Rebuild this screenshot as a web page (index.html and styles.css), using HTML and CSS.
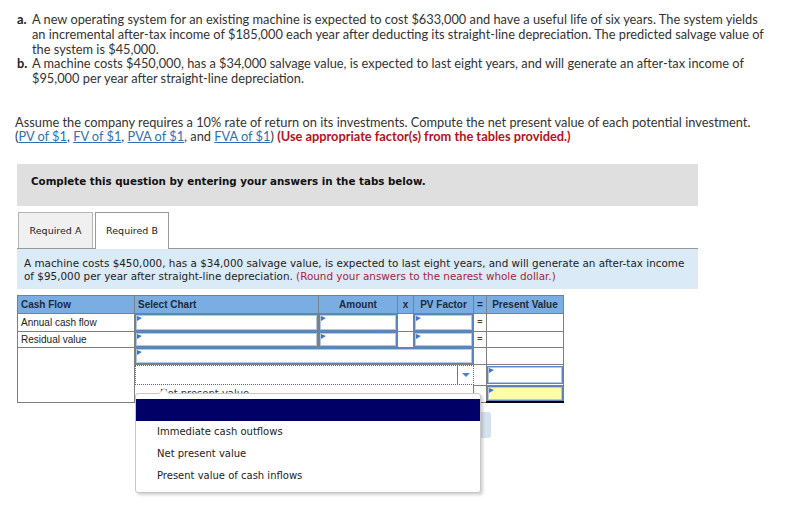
FILE: index.html
```html
<!DOCTYPE html>
<html>
<head>
<meta charset="utf-8">
<link rel="stylesheet" href="styles.css">
</head>
<body>
<div class="page">
  <div class="problem">
    <div class="item"><span class="lbl">a.</span><span class="txt">A new operating system for an existing machine is expected to cost $633,000 and have a useful life of six years. The system yields an incremental after-tax income of $185,000 each year after deducting its straight-line depreciation. The predicted salvage value of the system is $45,000.</span></div>
    <div class="item"><span class="lbl">b.</span><span class="txt">A machine costs $450,000, has a $34,000 salvage value, is expected to last eight years, and will generate an after-tax income of $95,000 per year after straight-line depreciation.</span></div>
  </div>
  <p class="assume">Assume the company requires a 10% rate of return on its investments. Compute the net present value of each potential investment.<br>(<a href="#">PV of $1</a>, <a href="#">FV of $1</a>, <a href="#">PVA of $1</a>, and <a href="#">FVA of $1</a>) <span class="red">(Use appropriate factor(s) from the tables provided.)</span></p>
  <div class="instructions">Complete this question by entering your answers in the tabs below.</div>
  <div class="tabs">
    <div class="tab">Required A</div>
    <div class="tab active">Required B</div>
  </div>
  <div class="panel">A machine costs $450,000, has a $34,000 salvage value, is expected to last eight years, and will generate an after-tax income of $95,000 per year after straight-line depreciation. <span class="note">(Round your answers to the nearest whole dollar.)</span></div>
  <div class="work">
    <table class="grid">
      <colgroup>
        <col class="c1"><col class="c2"><col class="c3"><col class="c4"><col class="c5"><col class="c6"><col class="c7">
      </colgroup>
      <tr class="rh">
        <th>Cash Flow</th><th>Select Chart</th><th class="ctr">Amount</th><th class="ctr">x</th><th class="ctr">PV Factor</th><th class="ctr">=</th><th class="ctr">Present Value</th>
      </tr>
      <tr class="r1">
        <td class="lab">Annual cash flow</td><td><div class="inp"></div></td><td><div class="inp"></div></td><td></td><td><div class="inp"></div></td><td class="eq">=</td><td></td>
      </tr>
      <tr class="r2">
        <td class="lab">Residual value</td><td><div class="inp"></div></td><td><div class="inp"></div></td><td></td><td><div class="inp"></div></td><td class="eq">=</td><td></td>
      </tr>
      <tr class="r3">
        <td rowspan="3"></td><td colspan="4"><div class="inp wide"></div></td><td></td><td class="sumtop"></td>
      </tr>
      <tr class="r4">
        <td colspan="4" class="selcell"><div class="select"><span class="selval"></span><span class="arrow"></span></div></td><td class="blank"></td><td class="pvcell"><div class="inp"></div></td>
      </tr>
      <tr class="r5">
        <td colspan="4" class="npv"><span class="npvtext">Net present value</span></td><td></td><td class="pvcell total"><div class="inp yellow"></div></td>
      </tr>
    </table>
    <div class="nav"><div class="navbtn">Required B</div></div>
    <div class="popup">
      <div class="caret"></div>
      <div class="hl"></div>
      <div class="opt">Immediate cash outflows</div>
      <div class="opt">Net present value</div>
      <div class="opt">Present value of cash inflows</div>
    </div>
  </div>
</div>
</body>
</html>
```
FILE: styles.css
```css
html, body { margin: 0; padding: 0; background: #fff; }
body { font-family: Lato, "Open Sans", sans-serif; color: #333; min-height: 532px; }
.page { padding: 12px 30px 0 15px; width: 755px; min-height: 520px; }

.problem { font-size: 12.8px; line-height: 14.8px; }
.item { display: flex; margin-left: 2px; }
.lbl { flex: none; width: 15px; font-weight: bold; color: #222; }
.txt { flex: 1; }

.assume { margin: 29px 0 0 0; font-size: 12.8px; line-height: 14.5px; }
.assume a { color: #2f6fb6; text-decoration: underline; }
.red { color: #b5121b; font-weight: bold; }

.instructions { margin: 20px 0 0 2px; width: 667px; background: #dfdfdf; padding: 10px 0 18px 14px; font-family: "DejaVu Sans", Verdana, sans-serif; font-weight: bold; font-size: 10.3px; line-height: 14px; color: #111; }

.tabs { display: flex; gap: 2px; margin: 6px 0 0 2px; width: 681px; border-bottom: 1px solid #999; padding-left: 1px; box-sizing: border-box; }
.tab { width: 75px; height: 36px; box-sizing: border-box; border: 1px solid #b5b5b5; border-bottom: none; background: #f0f0f0; display: flex; align-items: center; justify-content: center; font-family: "DejaVu Sans", Verdana, sans-serif; font-size: 9.5px; color: #222; }
.tab.active { background: #fff; border-color: #999; height: 37px; margin-bottom: -1px; width: 74px; }

.panel { margin-left: 2px; width: 681px; box-sizing: border-box; background: #dbeaf7; padding: 8px 10px 6px 7px; font-family: "DejaVu Sans", Verdana, sans-serif; font-size: 10.4px; line-height: 13px; color: #222; }
.note { color: #a3263a; }

.work { position: relative; margin: 6px 0 0 2px; }
.grid { border-collapse: collapse; table-layout: fixed; width: 546px; font-family: "Liberation Sans", Arial, sans-serif; font-size: 10px; color: #222; }
.c1 { width: 117px; } .c2 { width: 184px; } .c3 { width: 79px; } .c4 { width: 16px; } .c5 { width: 60px; } .c6 { width: 13px; } .c7 { width: 77px; }
.grid th, .grid td { border: 1px solid #7f7f7f; padding: 0; }
.grid th { background: #7aade2; text-align: left; padding-left: 3px; font-weight: bold; color: #1e2b3a; }
.grid th.ctr { text-align: center; padding-left: 0; }
.rh { height: 18px; }
.r1 { height: 18px; }
.r2 { height: 16px; }
.r3 { height: 17px; }
.r4 { height: 20px; }
.r5 { height: 17px; }
.lab { padding-left: 3px !important; }
.eq { text-align: center; font-weight: bold; font-size: 9px; color: #5a3a10; }

.inp { position: relative; box-sizing: border-box; border: 1px solid #5d84bb; box-shadow: inset 0 0 0 1px #b4c8e2; background: #fff; height: 16px; }
.r1 .inp { height: 17px; }
.r2 .inp { height: 15px; }
.r3 .inp { height: 16px; }
.r4 .inp { height: 18px; margin: 1px 0; }
.r5 .inp { height: 15px; }
.inp::before { content: ""; position: absolute; left: 1px; top: 1px; border-left: 5px solid #3c78c8; border-top: 2px solid transparent; border-bottom: 3px solid transparent; }
.inp.yellow { background: #ffffaa; }
.sumtop { border-top: 1px solid #000 !important; }
.total { border-bottom: 2px solid #000 !important; }

.selcell { border: none !important; }
.select { display: flex; justify-content: flex-end; height: 20px; box-sizing: border-box; border: 1px dotted #3b6fb3; }
.arrow { width: 15px; border-left: 1px solid #5b7fae; position: relative; }
.arrow::after { content: ""; position: absolute; left: 4px; top: 7px; border-top: 4px solid #4b83c8; border-left: 4px solid transparent; border-right: 4px solid transparent; }
.blank { border-top: none !important; border-left: none !important; border-bottom: none !important; }
.npv { border: none !important; vertical-align: middle; }
.npvtext { font-family: "DejaVu Sans", Verdana, sans-serif; font-size: 10px; padding-left: 25px; color: #333; }

.nav { display: flex; justify-content: flex-end; width: 474px; margin-top: 9px; }
.navbtn { width: 110px; height: 26px; border-radius: 3px; background: #d6e2ef; color: #d6e2ef; font-size: 10px; }

.popup { position: absolute; left: 118px; top: 98px; width: 346px; height: 100px; box-sizing: border-box; background: #fff; border: 1px solid #c8c8c8; border-radius: 3px; box-shadow: 2px 2px 3px rgba(0,0,0,0.18); padding-top: 5px; font-family: "DejaVu Sans", Verdana, sans-serif; font-size: 10px; color: #222; z-index: 2; }
.caret { position: absolute; left: 22px; top: -6px; width: 0; height: 0; border-left: 6px solid transparent; border-right: 6px solid transparent; border-bottom: 6px solid #c8c8c8; }
.caret::after { content: ""; position: absolute; left: -5px; top: 1px; border-left: 5px solid transparent; border-right: 5px solid transparent; border-bottom: 5px solid #fff; }
.hl { height: 22px; background: #000066; }
.opt { height: 22px; line-height: 22px; padding-left: 21px; }
```
